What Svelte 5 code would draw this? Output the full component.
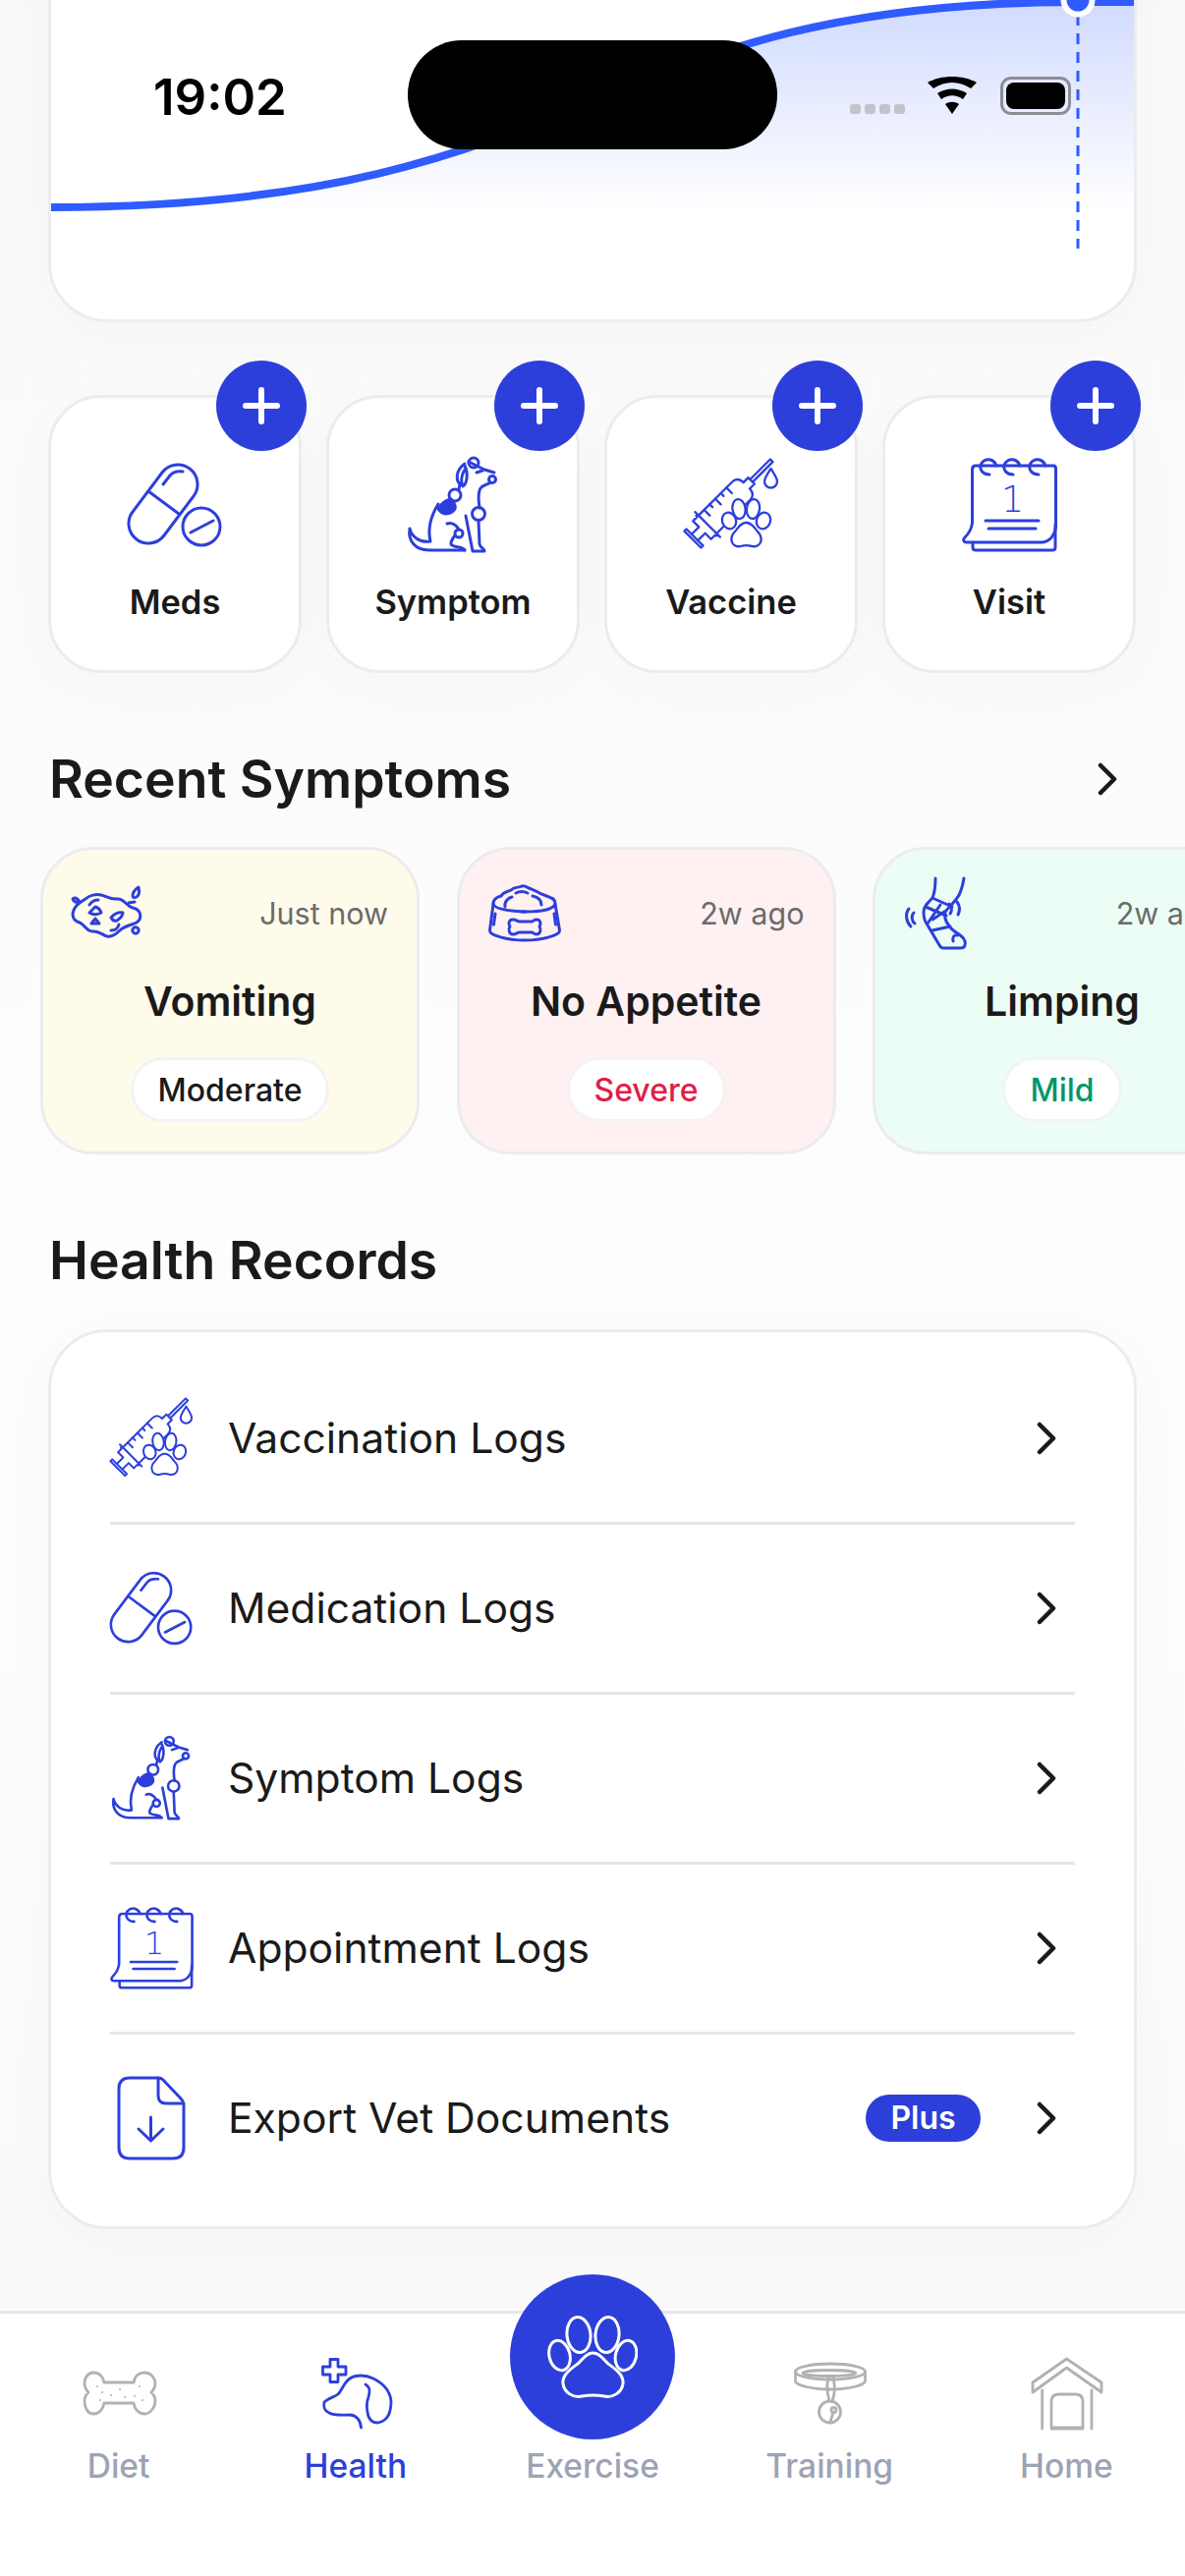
<script>
  // Health tab of the pet app, scrolled so the chart card is partly under the status bar
  const quickActions = [
    { label: 'Meds', icon: 'pill' },
    { label: 'Symptom', icon: 'dog' },
    { label: 'Vaccine', icon: 'syringe' },
    { label: 'Visit', icon: 'calendar' }
  ];

  const symptoms = [
    { title: 'Vomiting', time: 'Just now', level: 'Moderate', tone: 'yellow', icon: 'vomit' },
    { title: 'No Appetite', time: '2w ago', level: 'Severe', tone: 'pink', icon: 'bowl' },
    { title: 'Limping', time: '2w ago', level: 'Mild', tone: 'green', icon: 'foot' }
  ];

  const records = [
    { label: 'Vaccination Logs', icon: 'syringe' },
    { label: 'Medication Logs', icon: 'pill' },
    { label: 'Symptom Logs', icon: 'dog' },
    { label: 'Appointment Logs', icon: 'calendar' },
    { label: 'Export Vet Documents', icon: 'file', plus: true }
  ];

  const tabs = [
    { label: 'Diet', icon: 'bone' },
    { label: 'Health', icon: 'health', active: true },
    { label: 'Exercise', fab: true },
    { label: 'Training', icon: 'collar' },
    { label: 'Home', icon: 'house' }
  ];
</script>

{#snippet glyph(name)}
  {#if name === 'pill'}
    <svg class="ico" viewBox="0 0 96 96">
      <path d="M35 15A20 20 0 0 1 67 39L37 79A20 20 0 0 1 5 55Z" />
      <path d="M21 34L52 57" />
      <path d="M36 27L43 18Q47 13 56 14" />
      <circle cx="75" cy="70" r="19" />
      <path d="M64 76L87 64" />
    </svg>
  {:else if name === 'dog'}
    <svg class="ico" viewBox="0 0 96 96">
      <path class="solid" d="M33 52C36 47 41 43 46 42C49 46 51 48 50 52C47 57 38 60 33 52Z" />
      <path d="M4 72C2 84 9 94 24 94H60M4 72C6 80 14 87 25 85C22 72 25 60 33 47" />
      <path d="M56 27C50 24 51 12 60 6M64 4C70 7 76 10 80 12L90 15M60 8C64 16 62 27 58 29C56 25 56 18 60 12" />
      <circle cx="69" cy="5" r="5" />
      <circle cx="88" cy="22" r="3.5" />
      <path d="M86 25C82 28 78 28 76 31C73 36 74 44 75 51M74 64L75 88C76 92 80 92 80 95H68L61 59" />
      <circle cx="50" cy="38" r="6" />
      <circle cx="74" cy="57" r="6.5" />
      <path d="M55 27L54 32" />
      <path d="M42 67C47 65 52 69 54 73M50 79C46 84 45 88 47 89C52 92 58 90 60 94" />
      <circle cx="54" cy="77" r="4" />
      <path d="M72 15L78 13" />
    </svg>
  {:else if name === 'syringe'}
    <svg class="ico thin" viewBox="0 0 96 96">
      <g transform="translate(10 82) rotate(-45)">
        <path d="M-1.500 -12H1.500V12H-1.500Z" />
        <path d="M1.500 -4.500H12V-13H18V-14.500H20V-18M1.500 4.500H12V13H18V14.500H20V18" />
        <path d="M20 -13H68Q75 -13 76 -6V-4.500H83V4.500H76V6Q75 13 68 13H20Z" />
        <path d="M28 -13V-5M36 -13V-9M44 -13V-5M52 -13V-9M60 -13V-5" />
        <path d="M83 -1.800H112V1.800H83" />
      </g>
      <path d="M88.500 11C84 18 82 21 82 24A6.500 6.500 0 0 0 95 24C95 21 93 18 88.500 11Z" />
      <g class="whitefill">
        <ellipse cx="46" cy="64" rx="7" ry="8.500" transform="rotate(-20 46 64)" />
        <ellipse cx="56" cy="52" rx="6.500" ry="10" transform="rotate(-8 56 52)" />
        <ellipse cx="70.500" cy="52" rx="6.500" ry="10" transform="rotate(8 70.500 52)" />
        <ellipse cx="81" cy="64" rx="7" ry="8.500" transform="rotate(20 81 64)" />
        <path d="M63.500 66C70 66 72 72 75 75C78 78 79 81 78.500 84C78 89 73 91 69 90C66 89 61 89 58 90C54 91 49 89 48.500 84C48 81 49 78 52 75C55 72 57 66 63.500 66Z" />
      </g>
    </svg>
  {:else if name === 'calendar'}
    <svg class="ico" viewBox="0 0 96 96">
      <path d="M14 8H93Q95.500 8 95.500 11V70C95 78 90 85 82 86H5C1 86 1 83 3 81C8 76 10 72 10.500 66V12Q10.500 8 14 8Z" />
      <path d="M11 86V91Q11 94 14 94H92Q95 94 95 91V68" />
      <path d="M28 17C21 17 18 12 19 8C20 3 25 1 29 2C32 3 34 5 35 8M52 17C45 17 42 12 43 8C44 3 49 1 53 2C56 3 58 5 59 8M78 17C71 17 68 12 69 8C70 3 75 1 79 2C82 3 84 5 85 8" />
      <text class="num" x="51.500" y="55" text-anchor="middle">1</text>
      <path d="M24 64H78M27 72H75" />
    </svg>
  {:else if name === 'file'}
    <svg class="ico" viewBox="0 0 84 84">
      <path d="M20 1H49Q52 1 54 3L72 22Q75 25 75 28V72Q75 83 64 83H20Q9 83 9 72V12Q9 1 20 1Z" />
      <path d="M49 1V19Q49 27 57 27H75" />
      <path d="M41.500 41V65M29 53L41.500 65L54 53" />
    </svg>
  {:else if name === 'vomit'}
    <svg class="ico" viewBox="0 0 72 72">
      <path d="M1 36C2 28 8 25 14 21C18 17 25 16 30 17C35 18 39 22 47 21C54 21 55 28 62 30C71 32 72 41 66 45C60 48 54 48 49 53C45 57 41 60 36 59C31 58 28 53 21 54C15 54 13 47 8 45C4 44 1 41 1 36Z" />
      <path d="M62 18C62 14 65 11 68 9C69 13 69 17 66 19C64 20 62 20 62 18ZM1 21C3 19 6 20 8 24C5 25 2 24 1 21Z" />
      <circle cx="65" cy="53" r="3.200" />
      <path d="M58 25L64 24M18 27C20 24 23 22 27 22" />
      <path d="M18 35L24 29C27 30 29 32 30 35C26 37 21 37 18 35Z" />
      <path d="M40 40C43 36 48 34 52 35C52 39 49 41 46 43C43 44 41 42 40 40ZM20 46L24 41L28 46Z" />
      <path d="M40 53C44 53 47 51 48 47" />
    </svg>
  {:else if name === 'bowl'}
    <svg class="ico" viewBox="0 0 72 72">
      <path d="M5 26C5 21 9 19 13 18C15 14 19 14 23 12C27 8 31 10 34 8C38 7 40 10 44 11C47 13 50 13 52 15C56 17 60 18 64 20C67 21 68 24 68 26" />
      <path d="M5 26C6 30 14 33 37 34C55 34 67 31 68 26L72.500 53C73 58 55 63 37 63C19 63 1 58 1.500 53Z" />
      <path d="M17 29C16 24 20 20 24 19M28 15C32 13 36 13 40 15M45 18C50 19 54 22 54 27M34 34H38" />
      <path d="M7 36L5.500 47M67 36L68.500 47" />
      <path d="M25 42C29 42 29 44 32 44H44C46 44 46 42 49 42C53 42 54 46 52 49C54 52 53 57 49 57C46 57 46 55 44 55H32C29 55 29 57 25 57C21 57 20 52 22 49C20 46 21 42 25 42Z" />
    </svg>
  {:else if name === 'foot'}
    <svg class="ico" viewBox="0 0 72 72">
      <path d="M32 0C32 8 31 15 29 20C24 25 20 29 20 34C20 38 20 42 23 46L36 68C37 70 38 71 40 71H58C62 71 63 67 62 64C61 60 58 59 56 57C51 54 47 51 45 47C42 43 41 38 42 34C47 28 52 24 56 17C59 11 60 6 61 0" />
      <path d="M29 20L49 29M22 29L43 38M37 27L24 46M29 53L47 49M41 34L29 42" />
      <path d="M50 64C49 60 51 57 55 58M10 35C7 38 8 44 11 46M5 31C1 36 2 44 7 49M46 26C49 29 49 33 47 36M54 24C57 28 57 33 55 37" />
    </svg>
  {:else if name === 'bone'}
    <svg class="ico tabline" viewBox="0 0 72 72">
      <path d="M21 25H51C52 18 57 15 62 15C69 15 73 21 73 26C73 30 71 33 69 35C71 37 73 40 73 44C73 50 68 57 62 57C56 57 52 52 51 46H21C20 52 16 57 10 57C4 57 1 50 1 44C1 40 3 37 5 35C3 33 1 30 1 26C1 21 4 15 10 15C16 15 20 19 21 25Z" />
      <g class="speck">
        <circle cx="14" cy="29" r="1" /><circle cx="19" cy="35" r="1" /><circle cx="28" cy="38" r="1" />
        <circle cx="37" cy="32" r="1" /><circle cx="42" cy="40" r="1" /><circle cx="52" cy="39" r="1" />
        <circle cx="57" cy="29" r="1" /><circle cx="60" cy="43" r="1" /><circle cx="17" cy="43" r="1" />
      </g>
    </svg>
  {:else if name === 'health'}
    <svg class="ico tabline blue" viewBox="0 0 72 72">
      <path d="M10 1.500H18V9H26V17H18V24.500H10V17H2.500V9H10Z" />
      <path d="M41.500 71C41 63 36 58 30 58C23 58 14 59 9 56C4 54 3 49 4 45C8 41 14 40 18 37C22 33 24 25 30 21C36 17 46 17 54 21C64 26 71 34 72 44C72 53 70 62 62 65C55 68 49 64 48 55C47 50 47 45 49 40C50 36 51 32 49 30C48 28 47 28 46 27" />
    </svg>
  {:else if name === 'collar'}
    <svg class="ico tabline" viewBox="0 0 72 72">
      <ellipse cx="37" cy="14" rx="35.500" ry="8" />
      <path d="M1.500 14V24C3 28 18 32 37 32C56 32 71 28 72.500 24V14" />
      <ellipse cx="36" cy="15.500" rx="27" ry="3" />
      <path d="M36 18C33 24 33 32 36 44M39 18C42 26 42 36 39 44" />
      <circle cx="36.500" cy="55" r="11" />
      <circle cx="40.500" cy="53" r="2.500" />
      <path d="M40 55.500L37 65" />
    </svg>
  {:else if name === 'house'}
    <svg class="ico tabline" viewBox="0 0 72 72">
      <path d="M36.500 1L72 25V35L36.500 10L2 35V25Z" />
      <path d="M11.700 33V72M62 33V72" />
      <path d="M21 72V44Q21 37 29 37H45Q53 37 53 44V72ZM21 71H53" />
    </svg>
  {/if}
{/snippet}

{#snippet chevron()}
  <svg class="chev" viewBox="0 0 20 34"><path d="M3 3L17 17L3 31" /></svg>
{/snippet}

<div class="page">
  <div class="content">
    <section class="chart-card">
      <svg class="chart" viewBox="49 -73 1108 401">
        <defs>
          <linearGradient id="area" x1="0" y1="0" x2="0" y2="1">
            <stop offset="0" stop-color="#2f5bff" stop-opacity="0.22" />
            <stop offset="1" stop-color="#2f5bff" stop-opacity="0" />
          </linearGradient>
        </defs>
        <path d="M49 211C610 211 590 2 1097 2H1157V215H49Z" fill="url(#area)" />
        <path d="M49 211C610 211 590 2 1097 2H1157" fill="none" stroke="#2f5bff" stroke-width="8" />
        <path d="M1097 15V253" stroke="#2f5bff" stroke-width="3" stroke-dasharray="11 8" />
        <circle cx="1097" cy="0" r="14.500" fill="#2f5bff" stroke="#fff" stroke-width="6" />
      </svg>
    </section>

    <section class="quick">
      {#each quickActions as action}
        <div class="quick-card">
          <span class="add"><svg viewBox="0 0 38 38"><path d="M19 3V35M3 19H35" /></svg></span>
          <span class="quick-icon">{@render glyph(action.icon)}</span>
          <span class="quick-label">{action.label}</span>
        </div>
      {/each}
    </section>

    <div class="section-head first">
      <h2>Recent Symptoms</h2>
      <span class="head-chev">{@render chevron()}</span>
    </div>

    <section class="strip">
      {#each symptoms as s}
        <article class="symptom {s.tone}">
          <div class="symptom-top">
            <span class="symptom-icon">{@render glyph(s.icon)}</span>
            <span class="time">{s.time}</span>
          </div>
          <div class="symptom-title">{s.title}</div>
          <span class="level">{s.level}</span>
        </article>
      {/each}
    </section>

    <div class="section-head second">
      <h2>Health Records</h2>
    </div>

    <section class="records">
      {#each records as r}
        <div class="row">
          <span class="row-icon">{@render glyph(r.icon)}</span>
          <span class="row-label">{r.label}</span>
          {#if r.plus}<span class="plus">Plus</span>{/if}
          {@render chevron()}
        </div>
      {/each}
    </section>
  </div>

  <nav class="tabbar">
    {#each tabs as tab}
      <div class="tab" class:active={tab.active}>
        {#if tab.fab}
          <span class="fab">
            <svg viewBox="0 0 92 84">
              <ellipse cx="12.500" cy="40.500" rx="10.500" ry="15.500" transform="rotate(-14 12.500 40.500)" />
              <ellipse cx="32" cy="19.500" rx="12" ry="18" transform="rotate(-6 32 19.500)" />
              <ellipse cx="61" cy="19.500" rx="12" ry="18" transform="rotate(6 61 19.500)" />
              <ellipse cx="80" cy="40.500" rx="10.500" ry="15.500" transform="rotate(14 80 40.500)" />
              <path d="M46.500 38C54 38 57 45 62 49C69 54 78 60 77 69C76 78 67 84 58 82C52 81 41 81 35 82C26 84 17 78 16 69C15 60 24 54 31 49C36 45 39 38 46.500 38Z" />
            </svg>
          </span>
          <span class="tab-icon"></span>
        {:else}
          <span class="tab-icon">{@render glyph(tab.icon)}</span>
        {/if}
        <span class="tab-label">{tab.label}</span>
      </div>
    {/each}
  </nav>

  <!-- status bar sits over the scrolled content -->
  <header class="status">
    <span class="clock">19:02</span>
    <span class="island"></span>
    <div class="status-right">
      <span class="signal"><i></i><i></i><i></i><i></i></span>
      <svg class="wifi" viewBox="0 0 52 38">
        <path d="M26 38L19 28C23 25 29 25 33 28Z" />
        <path d="M15 23L11 17C20 11 32 11 41 17L37 23C30 18 22 18 15 23Z" />
        <path d="M7 12L1 6C15 -2 37 -2 51 6L45 12C33 4 19 4 7 12Z" />
      </svg>
      <span class="battery"><b></b></span>
    </div>
  </header>
</div>

<style>
  :global(body) {
    margin: 0;
    background: #fcfcfc;
  }

  .page {
    position: relative;
    display: flex;
    flex-direction: column;
    width: 1206px;
    height: 2622px;
    overflow: hidden;
    font-family: Inter, "Noto Sans", sans-serif;
    color: #1a1a1a;
    background: linear-gradient(#f9f9fa 0, #fbfbfb 700px, #fdfdfd 1200px, #fcfcfc 1900px, #f9f9f9 2352px);
  }

  .content {
    flex: 1;
    min-height: 0;
  }

  /* Shared icon strokes */
  .ico {
    display: block;
    width: 100%;
    height: 100%;
    overflow: visible;
    fill: none;
    stroke: #2d3fdb;
    stroke-width: 3;
    stroke-linecap: round;
    stroke-linejoin: round;
  }

  .ico.thin {
    stroke-width: 2.3;
  }

  .ico.tabline {
    stroke: #b1b1b1;
    stroke-width: 2.8;
  }

  .ico.tabline.blue {
    stroke: #2d3fdb;
  }

  .solid {
    fill: #2d3fdb;
  }

  .whitefill {
    fill: #fff;
  }

  .speck {
    fill: #b1b1b1;
    stroke: none;
  }

  .num {
    font-family: "DejaVu Sans", sans-serif;
    font-size: 37px;
    font-weight: 200;
    fill: #2d3fdb;
    stroke: none;
  }

  .chev {
    display: block;
    flex: none;
    width: 20px;
    height: 34px;
    fill: none;
    stroke: #1a1a1a;
    stroke-width: 4.5;
    stroke-linecap: round;
    stroke-linejoin: round;
  }

  /* Chart card */
  .chart-card {
    height: 401px;
    margin: -73px 49px 0;
    overflow: hidden;
    box-sizing: border-box;
    background: #fff;
    border: 3px solid #ececf0;
    border-radius: 60px;
    box-shadow: 0 12px 60px rgba(0, 0, 0, 0.025);
  }

  .chart {
    display: block;
    width: 1108px;
    height: 401px;
    margin: -3px;
  }

  /* Quick actions */
  .quick {
    display: grid;
    grid-template-columns: repeat(4, 258px);
    gap: 25px;
    margin: 74px 49px 0;
  }

  .quick-card {
    position: relative;
    display: flex;
    flex-direction: column;
    align-items: center;
    box-sizing: border-box;
    height: 283px;
    padding-top: 61px;
    background: #fff;
    border: 3px solid #ececf0;
    border-radius: 54px;
    box-shadow: 0 12px 60px rgba(0, 0, 0, 0.025);
  }

  .add {
    position: absolute;
    top: -38px;
    right: -8px;
    display: flex;
    align-items: center;
    justify-content: center;
    width: 92px;
    height: 92px;
    background: #2d3fdb;
    border-radius: 50%;
  }

  .add svg {
    width: 38px;
    height: 38px;
    fill: none;
    stroke: #fff;
    stroke-width: 6;
    stroke-linecap: round;
  }

  .quick-icon {
    width: 96px;
    height: 96px;
  }

  .quick-label {
    margin-top: 31px;
    font-size: 34.5px;
    line-height: 40px;
    font-weight: 600;
  }

  /* Section headings */
  .section-head {
    display: flex;
    align-items: center;
    justify-content: space-between;
    margin: 0 50px;
  }

  .section-head.first {
    margin-top: 78px;
  }

  .section-head.second {
    margin-top: 78px;
  }

  h2 {
    margin: 0;
    font-size: 53.5px;
    line-height: 60px;
    font-weight: 600;
  }

  .head-chev {
    margin-right: 19px;
  }

  /* Recent symptoms strip */
  .strip {
    display: flex;
    gap: 37.5px;
    margin-top: 39px;
    padding-left: 41px;
    overflow: hidden;
  }

  .symptom {
    flex: none;
    display: flex;
    flex-direction: column;
    align-items: center;
    box-sizing: border-box;
    width: 386px;
    height: 313px;
    padding: 29px 29px 0;
    border: 3px solid #ececf0;
    border-radius: 54px;
  }

  .symptom.yellow {
    background: #fffbeb;
  }

  .symptom.pink {
    background: #fff1f2;
  }

  .symptom.green {
    background: #ecfdf5;
  }

  .symptom-top {
    display: flex;
    align-items: center;
    justify-content: space-between;
    align-self: stretch;
  }

  .symptom-icon {
    width: 72px;
    height: 72px;
  }

  .time {
    font-size: 30.5px;
    line-height: 40px;
    color: #6b6b6b;
  }

  .symptom-title {
    margin-top: 29px;
    font-size: 41px;
    line-height: 48px;
    font-weight: 600;
  }

  .level {
    box-sizing: border-box;
    margin-top: 33px;
    padding: 0 25px;
    height: 66px;
    line-height: 62px;
    font-size: 32px;
    font-weight: 500;
    background: #fff;
    border: 3px solid #f3f3f5;
    border-radius: 33px;
  }

  .pink .level {
    color: #e11d48;
  }

  .green .level {
    color: #059669;
  }

  /* Health records list */
  .records {
    box-sizing: border-box;
    height: 916px;
    margin: 40px 49px 0;
    padding: 23px 60px;
    background: #fff;
    border: 3px solid #ececf0;
    border-radius: 60px;
    box-shadow: 0 12px 60px rgba(0, 0, 0, 0.025);
  }

  .row {
    display: flex;
    align-items: center;
    height: 170px;
    padding-right: 19px;
    border-bottom: 3px solid #e5e5ea;
  }

  .row:last-child {
    border-bottom: none;
  }

  .row-icon {
    flex: none;
    width: 84px;
    height: 84px;
    margin-right: 36px;
  }

  .row-label {
    flex: 1;
    font-size: 42.6px;
    line-height: 50px;
  }

  .plus {
    width: 117px;
    height: 48px;
    margin-right: 57px;
    line-height: 48px;
    text-align: center;
    font-size: 32px;
    font-weight: 600;
    color: #fff;
    background: #2d3fdb;
    border-radius: 24px;
  }

  /* Bottom tab bar */
  .tabbar {
    flex: none;
    display: flex;
    box-sizing: border-box;
    height: 270px;
    background: #fff;
    border-top: 3px solid #e5e5ea;
  }

  .tab {
    position: relative;
    flex: 1;
    display: flex;
    flex-direction: column;
    align-items: center;
    padding-top: 45px;
  }

  .tab-icon {
    width: 72px;
    height: 72px;
  }

  .tab-label {
    margin-top: 18px;
    font-size: 33.5px;
    line-height: 40px;
    font-weight: 450;
    color: #9ca3b4;
  }

  .tab.active .tab-label {
    color: #2d3fdb;
  }

  .fab {
    position: absolute;
    top: -40px;
    left: 50%;
    display: flex;
    align-items: center;
    justify-content: center;
    width: 168px;
    height: 168px;
    margin-left: -84px;
    background: #2d3fdb;
    border-radius: 50%;
  }

  .fab svg {
    width: 92px;
    height: 84px;
    fill: none;
    stroke: #fff;
    stroke-width: 3;
  }

  /* Status bar */
  .status {
    position: absolute;
    top: 41px;
    left: 0;
    display: grid;
    grid-template-columns: 415px 376px 1fr;
    width: 1206px;
    height: 111px;
  }

  .clock {
    align-self: center;
    padding: 3px 0 0 156px;
    font-size: 51px;
    font-weight: 600;
    color: #000;
  }

  .island {
    background: #000;
    border-radius: 55px;
  }

  .status-right {
    display: flex;
    align-items: flex-start;
    padding: 37px 0 0 74px;
  }

  .signal {
    display: flex;
    gap: 4px;
    margin-top: 28px;
  }

  .signal i {
    width: 11px;
    height: 10px;
    background: #c3c4ca;
    border-radius: 3px;
  }

  .wifi {
    width: 52px;
    height: 38px;
    margin-left: 22px;
    fill: #000;
  }

  .battery {
    box-sizing: border-box;
    width: 72px;
    height: 39px;
    margin-left: 23px;
    padding: 3px;
    border: 3px solid #8d8d95;
    border-radius: 11px;
  }

  .battery b {
    display: block;
    height: 100%;
    background: #000;
    border-radius: 8px;
  }
</style>
